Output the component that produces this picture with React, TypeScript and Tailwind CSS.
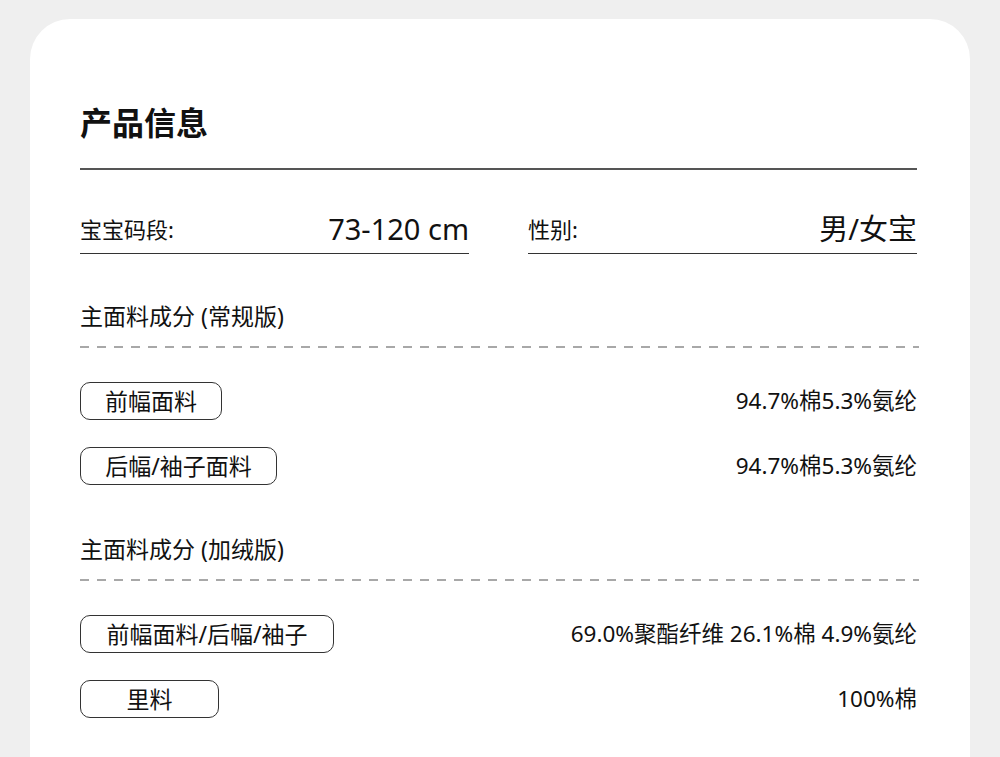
const font = { fontFamily: '"Noto Sans", "Noto Sans CJK SC", sans-serif' };

type Item = { label: string; value: string; width: string };

const regular: Item[] = [
  { label: "前幅面料", value: "94.7%棉5.3%氨纶", width: "w-[142px]" },
  { label: "后幅/袖子面料", value: "94.7%棉5.3%氨纶", width: "w-[197px]" },
];

const fleece: Item[] = [
  { label: "前幅面料/后幅/袖子", value: "69.0%聚酯纤维 26.1%棉 4.9%氨纶", width: "w-[254px]" },
  { label: "里料", value: "100%棉", width: "w-[139px]" },
];

const Dashed = () => (
  <div className="mt-[16px] h-[2px] w-[839px] bg-[repeating-linear-gradient(to_right,#a8a8a8_0_9px,transparent_9px_17px)]" />
);

const Rows = ({ items }: { items: Item[] }) => (
  <div className="mt-[34px] flex flex-col gap-[27px]">
    {items.map((item, i) => (
      <div key={i} className="flex items-center justify-between">
        <span
          className={`${item.width} flex h-[38px] items-center justify-center rounded-[10px] border border-[#333] text-[23px] leading-none`}
        >
          {item.label}
        </span>
        <span className="text-[22.5px] leading-none">{item.value}</span>
      </div>
    ))}
  </div>
);

const App = () => {
  return (
    <div className="h-[757px] overflow-hidden bg-[#efefef] pt-[19px]" style={font}>
      <div className="mx-[30px] h-[800px] rounded-t-[40px] bg-white pl-[50px] pr-[53px] pt-[84px] text-[#111]">
        {/* title */}
        <h1 className="text-[32px] leading-[40px] font-bold">产品信息</h1>
        <div className="mt-[25px] h-[2px] bg-[#555]" />

        {/* size / gender */}
        <div className="mt-[35px] grid grid-cols-2 gap-x-[59px]">
          <div className="flex h-[49px] items-center justify-between border-b-[1.5px] border-[#333]">
            <span className="text-[22px]">宝宝码段:</span>
            <span className="text-[29px]">73-120 cm</span>
          </div>
          <div className="flex h-[49px] items-center justify-between border-b-[1.5px] border-[#333]">
            <span className="text-[22px]">性别:</span>
            <span className="text-[29px]">男/女宝</span>
          </div>
        </div>

        {/* regular */}
        <div className="mt-[48px] text-[23px] leading-[28px]">主面料成分 (常规版)</div>
        <Dashed />
        <Rows items={regular} />

        {/* fleece */}
        <div className="mt-[50px] text-[23px] leading-[28px]">主面料成分 (加绒版)</div>
        <Dashed />
        <Rows items={fleece} />
      </div>
    </div>
  );
};

export default App;
